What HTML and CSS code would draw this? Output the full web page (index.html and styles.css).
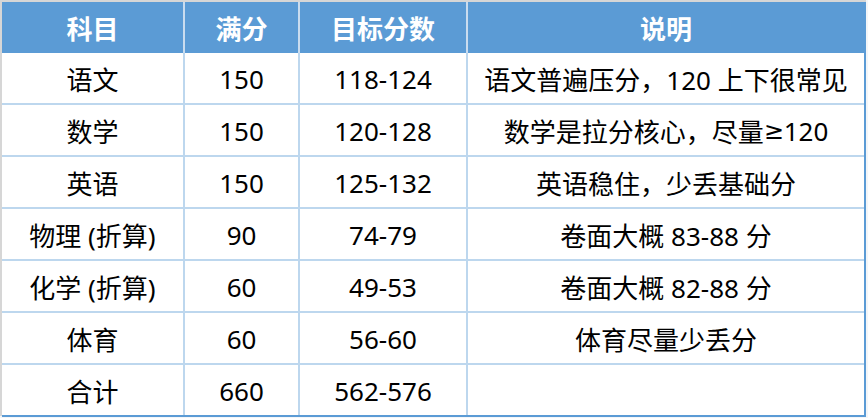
FILE: index.html
```html
<!DOCTYPE html>
<html lang="zh-CN">
<head>
<meta charset="utf-8">
<link rel="stylesheet" href="styles.css">
</head>
<body>
<div class="sheet">
  <div class="table">
    <div class="head">
      <div class="cell">科目</div>
      <div class="cell">满分</div>
      <div class="cell">目标分数</div>
      <div class="cell">说明</div>
    </div>
    <div class="body">
      <div class="cell">语文</div><div class="cell">150</div><div class="cell">118-124</div><div class="cell">语文普遍压分，120 上下很常见</div>
      <div class="cell">数学</div><div class="cell">150</div><div class="cell">120-128</div><div class="cell">数学是拉分核心，尽量<span class="sym">≥</span>120</div>
      <div class="cell">英语</div><div class="cell">150</div><div class="cell">125-132</div><div class="cell">英语稳住，少丢基础分</div>
      <div class="cell">物理 (折算)</div><div class="cell">90</div><div class="cell">74-79</div><div class="cell">卷面大概 83-88 分</div>
      <div class="cell">化学 (折算)</div><div class="cell">60</div><div class="cell">49-53</div><div class="cell">卷面大概 82-88 分</div>
      <div class="cell">体育</div><div class="cell">60</div><div class="cell">56-60</div><div class="cell">体育尽量少丢分</div>
      <div class="cell">合计</div><div class="cell">660</div><div class="cell">562-576</div><div class="cell"></div>
    </div>
  </div>
</div>
</body>
</html>
```

FILE: styles.css
```css
html, body {
  margin: 0;
  padding: 0;
  background: #f4f6f8;
}
body {
  width: 868px;
  height: 418px;
  overflow: hidden;
  font-family: "Noto Sans", "Noto Sans CJK SC", sans-serif;
}
.sheet {
  border-top: 2px solid #d6d6d6;
  border-left: 2px solid #d6d6d6;
  width: 866px;
  height: 416px;
  box-sizing: border-box;
  background: #fafafa;
}
.table {
  width: 864px;
  box-sizing: border-box;
  border-right: 2px solid #5b9bd5;
  border-bottom: 2px solid #5b9bd5;
}
.head, .body {
  display: grid;
  grid-template-columns: 181px 113px 166px 396px;
  column-gap: 2px;
}
.head {
  background: #c9dcef;
  grid-template-rows: 51px;
}
.body {
  background: #bdd7ee;
  grid-auto-rows: 50px;
  row-gap: 2px;
}
.cell {
  display: flex;
  align-items: center;
  justify-content: center;
  font-size: 26px;
  color: #000;
  background: #fff;
  white-space: nowrap;
  padding-top: 2px;
  box-sizing: border-box;
}
.head .cell {
  background: #5b9bd5;
  color: #fff;
  font-weight: bold;
  padding-top: 0;
}
.sym {
  font-family: "DejaVu Sans", sans-serif;
  font-size: 24px;
}
```
